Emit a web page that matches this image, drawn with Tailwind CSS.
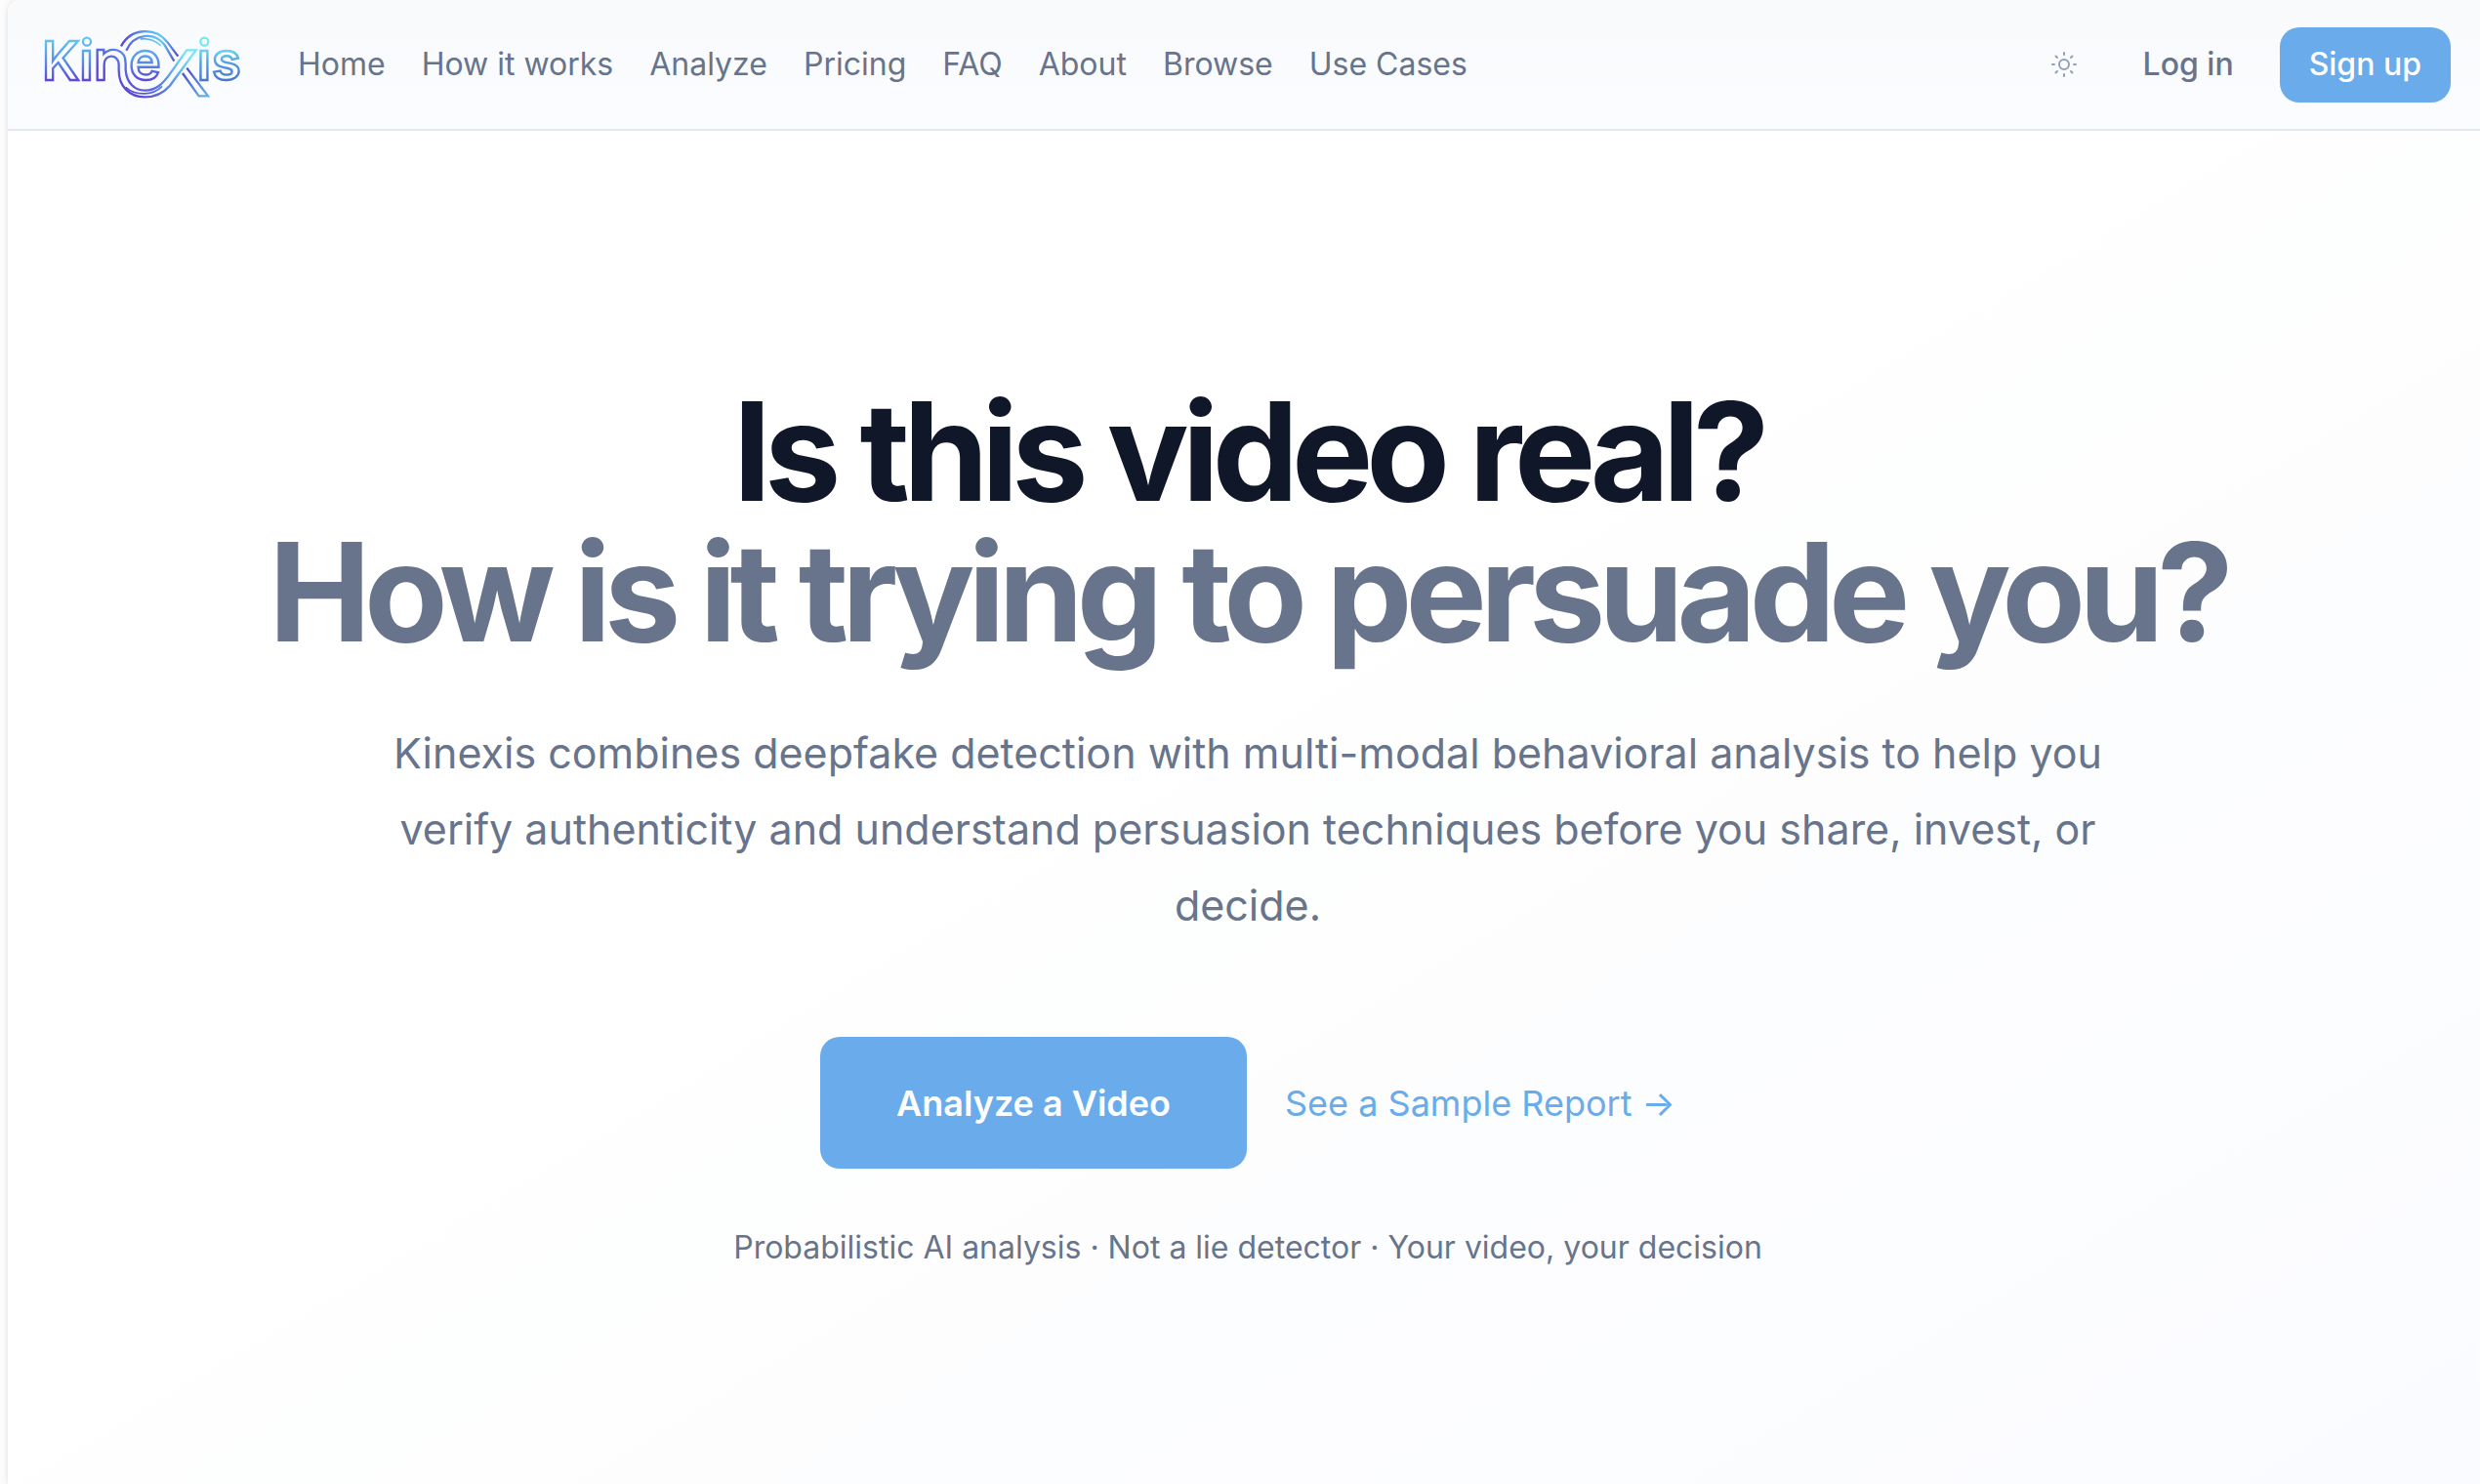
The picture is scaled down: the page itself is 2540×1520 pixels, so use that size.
<!DOCTYPE html>
<html lang="en">
<head>
  <meta charset="UTF-8">
  <meta name="viewport" content="width=device-width, initial-scale=1.0">
  <title>Kinexis</title>
  <script src="https://cdn.jsdelivr.net/npm/@tailwindcss/browser@4"></script>
</head>
<body class="min-h-screen overflow-x-hidden bg-[#fcfcfc] font-['Inter',sans-serif] text-[#67748b]">
  <div class="ml-2 -mr-2 min-h-screen flex flex-col rounded-tl-xl overflow-hidden bg-linear-to-br from-white from-40% to-[#fafbfe] shadow-[0_0_6px_rgba(0,0,0,0.12)]">

    <header class="flex items-center h-[134px] px-[38px] border-b-2 border-slate-200 bg-linear-to-b from-slate-50 to-[#fbfcff]">
      <a href="#" aria-label="Kinexis home" class="shrink-0">
        <svg class="w-[200px] h-[70px] overflow-visible" viewBox="48 35 600 210" fill="none" stroke="url(#letters)" stroke-width="7">
          <defs>
            <linearGradient id="letters" gradientUnits="userSpaceOnUse" x1="0" y1="190" x2="0" y2="60">
              <stop offset="0" stop-color="#5d48d8" />
              <stop offset="0.5" stop-color="#5893ea" />
              <stop offset="1" stop-color="#63c8f2" />
            </linearGradient>
            <linearGradient id="letters-end" gradientUnits="userSpaceOnUse" x1="0" y1="190" x2="0" y2="80">
              <stop offset="0" stop-color="#4a74cf" />
              <stop offset="0.5" stop-color="#529de3" />
              <stop offset="1" stop-color="#74e8f2" />
            </linearGradient>
            <linearGradient id="ribbon" gradientUnits="userSpaceOnUse" x1="330" y1="240" x2="450" y2="80">
              <stop offset="0" stop-color="#5b45d6" />
              <stop offset="0.5" stop-color="#5793ea" />
              <stop offset="1" stop-color="#74e8f2" />
            </linearGradient>
            <linearGradient id="arc" gradientUnits="userSpaceOnUse" x1="282" y1="90" x2="457" y2="125">
              <stop offset="0" stop-color="#5b45d6" />
              <stop offset="0.35" stop-color="#5aa4ee" />
              <stop offset="0.65" stop-color="#63ccf2" />
              <stop offset="1" stop-color="#5145d0" />
            </linearGradient>
            <linearGradient id="leg" gradientUnits="userSpaceOnUse" x1="475" y1="155" x2="535" y2="240">
              <stop offset="0" stop-color="#5048cc" />
              <stop offset="1" stop-color="#5fb0e8" />
            </linearGradient>
          </defs>
          <g font-family="Inter" font-size="165" font-weight="600">
            <text x="39" y="187">K</text>
            <text x="154" y="187">ı</text>
            <text x="307" y="187">e</text>
            <text x="515" y="187" stroke="url(#letters-end)">ı</text>
            <text x="560" y="187" stroke="url(#letters-end)">s</text>
          </g>
          <circle cx="177" cy="70" r="12" />
          <circle cx="538" cy="70" r="12" stroke="url(#letters-end)" />
          <!-- ribbon running from the n under the e and up through the x -->
          <path stroke="url(#ribbon)" d="M230 188H209V95H229V107C251 86 296 90 296 137V157C299 196 323 220 355 220C390 220 410 199 430 172L484 96H512L432 205C411 229 386 240 355 240C308 240 275 208 275 157V139C273 106 230 107 230 140V191" />
          <path stroke="url(#ribbon)" d="M296 210C326 237 381 236 408 207" stroke-width="5" />
          <!-- upper arc and the lower right leg -->
          <g stroke="url(#arc)">
            <path d="M282 84C312 28 386 24 423 70L457 115" />
            <path d="M298 97C322 44 382 39 415 79L445 130" />
            <path d="M341 62C370 58 388 67 404 82" stroke-width="4" />
          </g>
          <path d="M471 167L521 237H549L484 151" stroke="url(#leg)" />
        </svg>
      </a>

      <nav class="flex items-center gap-[37px] ml-[59px] text-[32px]">
        <a href="#">Home</a>
        <a href="#">How it works</a>
        <a href="#">Analyze</a>
        <a href="#">Pricing</a>
        <a href="#">FAQ</a>
        <a href="#">About</a>
        <a href="#">Browse</a>
        <a href="#">Use Cases</a>
      </nav>

      <div class="flex items-center ml-auto text-[32px] font-medium">
        <button type="button" aria-label="Toggle theme" class="mr-[67px] text-slate-400">
          <svg class="w-7 h-7" viewBox="0 0 28 28" fill="none" stroke="currentColor" stroke-width="2" stroke-linecap="round">
            <circle cx="14" cy="14" r="5" />
            <path d="M14 2v2M14 24v2M2 14h2M24 14h2M5.500 5.500l1.500 1.500M21 21l1.500 1.500M5.500 22.500l1.500-1.500M21 7l1.500-1.500" />
          </svg>
        </button>
        <a href="#" class="mr-[47px]">Log in</a>
        <a href="#" class="flex items-center h-[77px] px-[30px] rounded-[20px] bg-[#69abeb] text-white">Sign up</a>
      </div>
    </header>

    <main class="flex flex-col items-center px-10 pt-64 text-center">
      <h1 class="text-[140px] leading-[144px] font-bold tracking-tighter text-[#101728]">
        Is this video real?
        <span class="block text-[#67748b]">How is it trying to persuade you?</span>
      </h1>
      <p class="max-w-[1792px] mt-[54px] text-[43px] leading-[78px]">
        Kinexis combines deepfake detection with multi-modal behavioral analysis to help you verify authenticity and understand persuasion techniques before you share, invest, or decide.
      </p>
      <div class="flex items-center justify-center gap-[39px] mt-24 text-[36px]">
        <a href="#" class="flex items-center h-[135px] px-[78px] rounded-[20px] bg-[#69abeb] font-semibold text-white">Analyze a Video</a>
        <a href="#" class="text-[#69abeb]">See a Sample Report →</a>
      </div>
      <p class="mt-14 text-[32px] leading-[50px]">Probabilistic AI analysis · Not a lie detector · Your video, your decision</p>
    </main>
  </div>
</body>
</html>
